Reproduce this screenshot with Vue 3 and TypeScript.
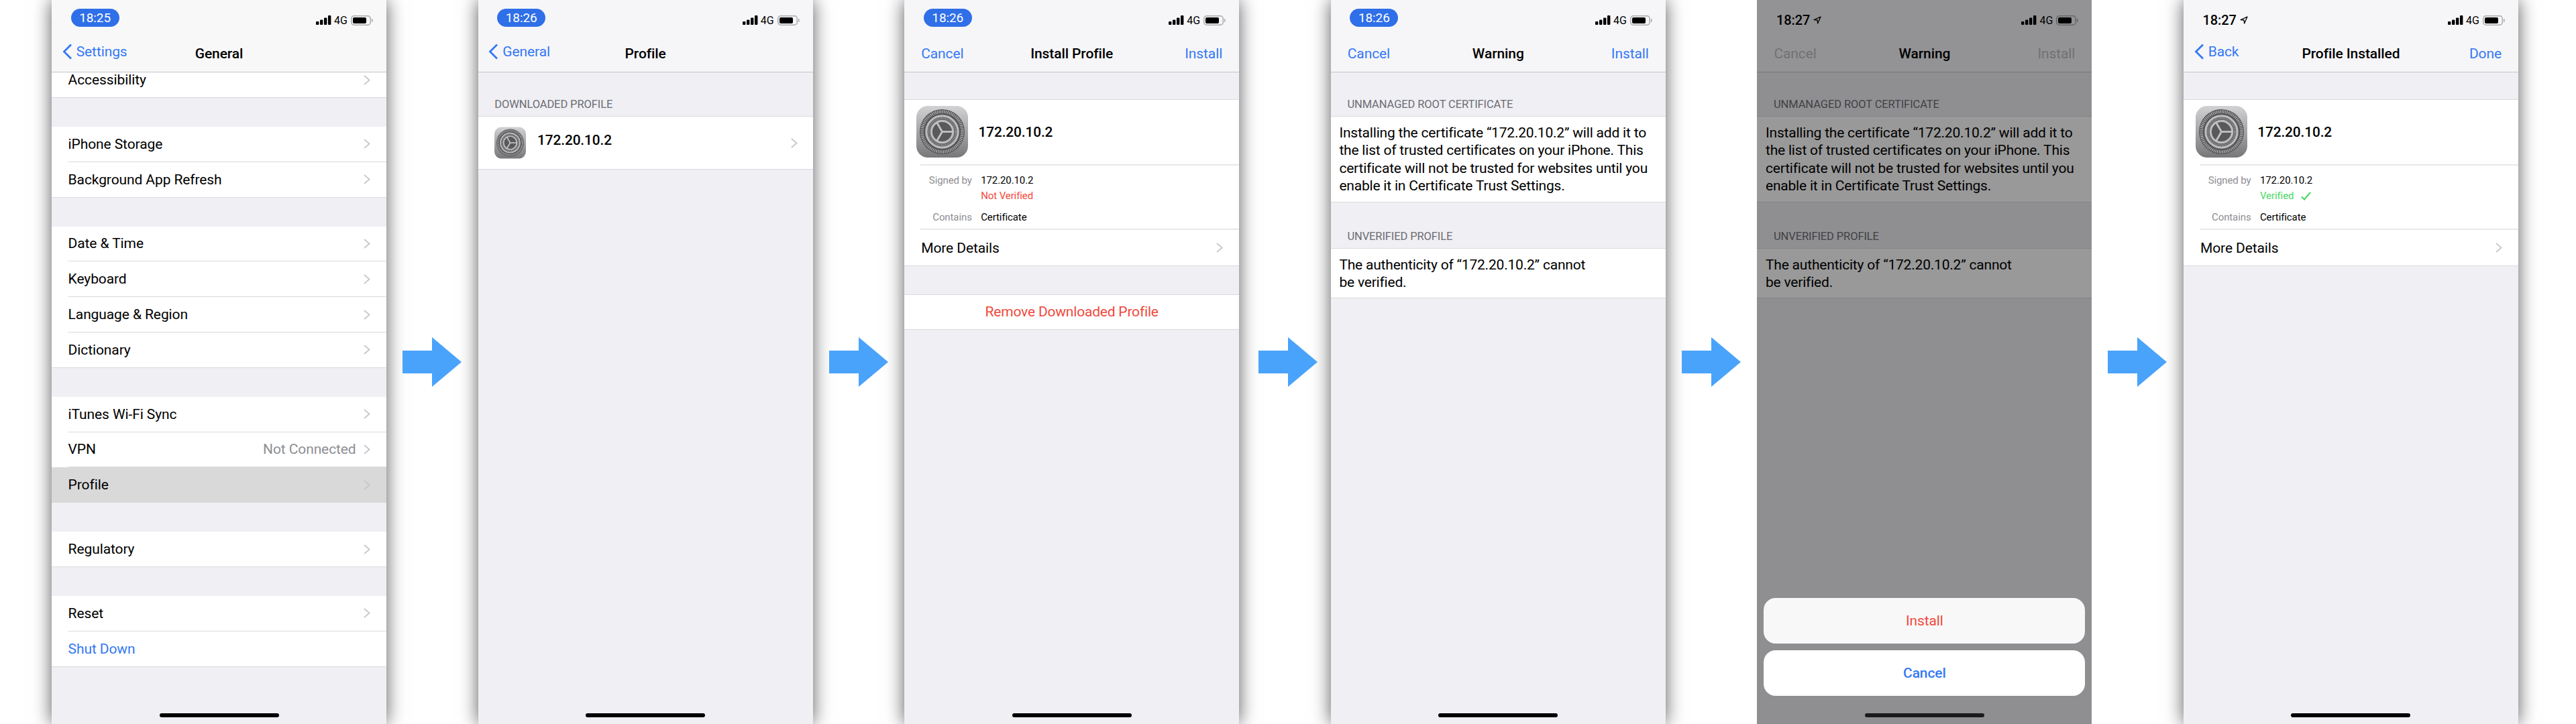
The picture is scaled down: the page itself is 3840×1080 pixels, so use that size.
<template>
  <div class="flow">
    <!-- shared glyphs -->
    <svg class="defs" aria-hidden="true">
      <defs>
        <linearGradient id="gearBg" x1="0" y1="0" x2="0" y2="1">
          <stop offset="0" stop-color="#d2d2d4" />
          <stop offset="1" stop-color="#77777a" />
        </linearGradient>
      </defs>
      <symbol id="gear" viewBox="0 0 77 77">
        <rect width="77" height="77" rx="17" fill="url(#gearBg)" />
        <circle cx="38.5" cy="38.5" r="33.5" fill="#555557" />
        <circle cx="38.5" cy="38.5" r="30" fill="none" stroke="#bdbdbf" stroke-width="4.6" stroke-dasharray="1.1 1.518" />
        <circle cx="38.5" cy="38.5" r="23.6" fill="none" stroke="#bcbcbe" stroke-width="3.2" />
        <circle cx="38.5" cy="38.5" r="20" fill="none" stroke="#a6a6a8" stroke-width="3" stroke-dasharray="1 1.094" />
        <circle cx="38.5" cy="38.5" r="16.2" fill="#59595b" stroke="#bcbcbe" stroke-width="3.2" />
        <g stroke="#c2c2c4" stroke-width="2.8">
          <line x1="38.5" y1="38.5" x2="55" y2="38.5" />
          <line x1="38.5" y1="38.5" x2="30.2" y2="24.2" />
          <line x1="38.5" y1="38.5" x2="30.2" y2="52.8" />
        </g>
      </symbol>
      <symbol id="chevron" viewBox="0 0 10 15">
        <polyline points="1,1 8.6,7.5 1,14" fill="none" stroke="#c7c7cc" stroke-width="1.8" />
      </symbol>
    </svg>

    <template v-for="(screen, i) in screens" :key="screen.kind">
      <section class="phone" :class="{ dimmed: screen.kind === 'sheet', bare: screen.kind === 'sheet' }">
        <header class="bar">
          <div class="status">
            <span v-if="screen.pill" class="time-pill">{{ screen.time }}</span>
            <span v-else class="time-plain">
              {{ screen.time }}
              <svg width="12" height="12" viewBox="0 0 12 12">
                <path d="M11 1 1.2 5.6l4.9.4.5 4.9z" fill="none" stroke="#000" stroke-width="1.3" stroke-linejoin="round" />
              </svg>
            </span>
            <div class="indicators">
              <svg width="23" height="14" viewBox="0 0 23 14">
                <rect x="0" y="9" width="4.4" height="5" rx="1" />
                <rect x="6" y="6.5" width="4.4" height="7.5" rx="1" />
                <rect x="12" y="3.5" width="4.4" height="10.5" rx="1" />
                <rect x="18" y="0" width="4.4" height="14" rx="1" />
              </svg>
              <span class="net">4G</span>
              <svg class="battery" width="33" height="15" viewBox="0 0 33 15">
                <rect x=".75" y=".75" width="28.5" height="13.5" rx="4" fill="none" stroke="#a9a9ac" stroke-width="1.5" />
                <rect x="3" y="3" width="20" height="9" rx="2" fill="#000" />
                <rect x="31" y="5" width="1.6" height="5" rx=".8" fill="#a9a9ac" />
              </svg>
            </div>
          </div>
          <nav class="nav">
            <div class="nav-left">
              <span v-if="screen.left" class="nav-action" :class="{ back: screen.hasBack }">
                <svg v-if="screen.hasBack" width="15" height="24" viewBox="0 0 15 24">
                  <polyline points="13,1.5 2.5,12 13,22.5" fill="none" stroke="currentColor" stroke-width="2.8" />
                </svg>
                {{ screen.left }}
              </span>
            </div>
            <span class="nav-title">{{ screen.title }}</span>
            <div class="nav-right">
              <span v-if="screen.right" class="nav-action">{{ screen.right }}</span>
            </div>
          </nav>
        </header>

        <main class="content">
          <!-- General settings list -->
          <template v-if="screen.kind === 'settings'">
            <div v-for="(group, g) in settingsGroups" :key="g" class="group" :class="{ clipped: g === 0 }">
              <div v-for="row in group" :key="row.label" class="row" :class="{ active: row.active }">
                <span :class="{ link: row.link }">{{ row.label }}</span>
                <span v-if="row.value" class="row-value">{{ row.value }}</span>
                <svg v-if="!row.link" class="chevron"><use href="#chevron" /></svg>
              </div>
            </div>
          </template>

          <template v-else-if="screen.kind === 'downloaded'">
            <h2 class="section-label">DOWNLOADED PROFILE</h2>
            <div class="block profile-row">
              <svg class="gear-small"><use href="#gear" /></svg>
              <span class="profile-name">172.20.10.2</span>
              <svg class="chevron"><use href="#chevron" /></svg>
            </div>
          </template>

          <template v-else-if="screen.kind === 'install' || screen.kind === 'installed'">
            <div class="block card">
              <div class="card-head">
                <svg class="gear-large"><use href="#gear" /></svg>
                <span class="profile-name">172.20.10.2</span>
              </div>
              <dl class="details">
                <dt>Signed by</dt>
                <dd>172.20.10.2</dd>
                <dt></dt>
                <dd v-if="screen.kind === 'install'" class="bad">Not Verified</dd>
                <dd v-else class="good">
                  Verified
                  <svg width="15" height="13" viewBox="0 0 15 13">
                    <polyline points="1,7.5 5,11.5 14,1" fill="none" stroke="#4cd964" stroke-width="2.2" />
                  </svg>
                </dd>
                <dt class="contains">Contains</dt>
                <dd class="contains">Certificate</dd>
              </dl>
              <div class="more">
                More Details
                <svg class="chevron"><use href="#chevron" /></svg>
              </div>
            </div>
            <div v-if="screen.kind === 'install'" class="block remove">Remove Downloaded Profile</div>
          </template>

          <template v-else>
            <h2 class="section-label">UNMANAGED ROOT CERTIFICATE</h2>
            <p class="block note">
              Installing the certificate “172.20.10.2” will add it to<br />
              the list of trusted certificates on your iPhone. This<br />
              certificate will not be trusted for websites until you<br />
              enable it in Certificate Trust Settings.
            </p>
            <h2 class="section-label second">UNVERIFIED PROFILE</h2>
            <p class="block note">
              The authenticity of “172.20.10.2” cannot<br />
              be verified.
            </p>
          </template>
        </main>

        <div v-if="screen.kind === 'sheet'" class="scrim"></div>
        <div v-if="screen.kind === 'sheet'" class="sheet">
          <button class="sheet-btn install">Install</button>
          <button class="sheet-btn cancel">Cancel</button>
        </div>
        <div class="home-bar"></div>
      </section>

      <div v-if="i < screens.length - 1" class="arrow-slot">
        <svg class="arrow" :class="{ shifted: i === 2 }" width="88" height="74" viewBox="0 0 88 74">
          <polygon points="0,20 44,20 44,0 88,37 44,74 44,54 0,54" fill="#4aa3fb" />
        </svg>
      </div>
    </template>
  </div>
</template>

<script setup lang="ts">
interface Screen {
  kind: string
  time: string
  pill: boolean
  left: string
  hasBack: boolean
  title: string
  right: string
}

interface SettingsRow {
  label: string
  value?: string
  active?: boolean
  link?: boolean
}

const screens: Screen[] = [
  { kind: 'settings', time: '18:25', pill: true, left: 'Settings', hasBack: true, title: 'General', right: '' },
  { kind: 'downloaded', time: '18:26', pill: true, left: 'General', hasBack: true, title: 'Profile', right: '' },
  { kind: 'install', time: '18:26', pill: true, left: 'Cancel', hasBack: false, title: 'Install Profile', right: 'Install' },
  { kind: 'warning', time: '18:26', pill: true, left: 'Cancel', hasBack: false, title: 'Warning', right: 'Install' },
  { kind: 'sheet', time: '18:27', pill: false, left: 'Cancel', hasBack: false, title: 'Warning', right: 'Install' },
  { kind: 'installed', time: '18:27', pill: false, left: 'Back', hasBack: true, title: 'Profile Installed', right: 'Done' },
]

const settingsGroups: SettingsRow[][] = [
  [{ label: 'Accessibility' }],
  [{ label: 'iPhone Storage' }, { label: 'Background App Refresh' }],
  [{ label: 'Date & Time' }, { label: 'Keyboard' }, { label: 'Language & Region' }, { label: 'Dictionary' }],
  [{ label: 'iTunes Wi-Fi Sync' }, { label: 'VPN', value: 'Not Connected' }, { label: 'Profile', active: true }],
  [{ label: 'Regulatory' }],
  [{ label: 'Reset' }, { label: 'Shut Down', link: true }],
]
</script>

<style scoped>
.flow {
  display: flex;
  width: 3840px;
  height: 1080px;
  padding-left: 77px;
  box-sizing: border-box;
  background: #fff;
  overflow: hidden;
  font-family: Roboto, "Liberation Sans", sans-serif;
  font-size: 21px;
  letter-spacing: -0.1px;
  color: #000;
}

.defs {
  position: absolute;
  width: 0;
  height: 0;
}

.phone {
  position: relative;
  flex: 0 0 499px;
  display: flex;
  flex-direction: column;
  height: 1080px;
  background: #efeff4;
  box-shadow: 0 0 26px rgba(0, 0, 0, 0.65);
}

.phone.bare {
  box-shadow: none;
}

.arrow-slot {
  flex: 0 0 136.6px;
  display: flex;
  align-items: center;
  position: relative;
  z-index: 1;
}

.arrow {
  margin-left: 24px;
}

.arrow.shifted {
  margin-left: 29px;
}

.bar {
  flex: 0 0 108px;
  box-sizing: border-box;
  background: #f6f6f8;
  border-bottom: 1px solid #c4c4c7;
}

.phone:first-of-type .bar {
  background: #f8f8f8;
}

.status {
  height: 52px;
  display: flex;
  align-items: center;
  justify-content: space-between;
  padding: 0 20px 0 28.6px;
}

.time-pill {
  width: 72px;
  height: 27px;
  line-height: 27px;
  border-radius: 14px;
  background: #2f6fe8;
  color: #fff;
  text-align: center;
  font-size: 19px;
}

.time-plain {
  display: flex;
  align-items: center;
  gap: 5px;
  margin-top: 8px;
  font-size: 20px;
  font-weight: 500;
}

.indicators {
  display: flex;
  align-items: center;
  margin-top: 8px;
  gap: 4px;
}

.net {
  font-size: 16px;
  letter-spacing: 0;
}

.battery {
  margin-left: 1px;
}

.nav {
  height: 55px;
  display: grid;
  grid-template-columns: 1fr auto 1fr;
  align-items: center;
  padding: 0 25px;
}

.nav-title {
  font-weight: 500;
}

.nav-right {
  text-align: right;
}

.nav-action {
  color: #3478f6;
}

.nav-action.back {
  display: inline-flex;
  align-items: center;
  gap: 6px;
  margin-left: -9.3px;
}

.dimmed .nav-action {
  color: #bdbdbd;
}

.content {
  flex: 1;
  overflow: hidden;
}

.group {
  margin-bottom: 43px;
  background: #fff;
}

.group.clipped {
  margin-top: -14.8px;
}

.row {
  height: 52.8px;
  box-sizing: border-box;
  display: flex;
  align-items: center;
  padding: 0 24.4px 0 24.6px;
  position: relative;
  border-bottom: 1px solid #dadade;
}

.group .row:not(:last-child) {
  border-bottom-color: transparent;
}

.group .row:not(:last-child)::after {
  content: "";
  position: absolute;
  left: 24.6px;
  right: 0;
  bottom: -1px;
  height: 1px;
  background: #dadade;
}

.row.active {
  background: #d9d9d9;
}

.link {
  color: #3478f6;
}

.row-value {
  margin-left: auto;
  color: #8e8e93;
}

.chevron {
  width: 10px;
  height: 15px;
  margin-left: auto;
  flex-shrink: 0;
}

.row-value + .chevron {
  margin-left: 11px;
}

.section-label {
  margin: 0;
  padding: 38px 0 7px 24.6px;
  font-size: 16.5px;
  line-height: 20px;
  font-weight: 400;
  color: #6d6d72;
}

.section-label.second {
  padding-top: 41px;
}

.block {
  margin: 0;
  background: #fff;
  border-top: 1px solid #dadade;
  border-bottom: 1px solid #dadade;
}

.profile-row {
  height: 80px;
  box-sizing: border-box;
  display: flex;
  align-items: center;
  padding: 0 23px 0 24.5px;
}

.gear-small {
  width: 47px;
  height: 48px;
  margin-right: 17px;
}

.profile-name {
  margin-bottom: 8px;
  font-size: 20.8px;
  font-weight: 500;
}

.card {
  margin-top: 40px;
}

.card-head {
  height: 97px;
  margin-top: -1px;
  box-sizing: border-box;
  display: flex;
  align-items: center;
  padding-left: 18.3px;
}

.gear-large {
  width: 77px;
  height: 77px;
  margin-right: 15px;
}

.card-head .profile-name {
  margin-bottom: 0;
}

.details {
  margin: 0 0 0 24px;
  padding: 11px 0 5px;
  display: grid;
  grid-template-columns: 76.6px 1fr;
  column-gap: 13.4px;
  font-size: 15px;
  line-height: 23px;
  border-top: 2px solid #e8e8ea;
  border-bottom: 2px solid #e8e8ea;
}

.details dt {
  text-align: right;
  color: #8e8e93;
}

.details dd {
  margin: 0;
}

.details .contains {
  margin-top: 9px;
}

.details .bad {
  color: #f5483b;
}

.details .good {
  display: flex;
  align-items: center;
  gap: 11px;
  color: #4cd964;
}

.more {
  height: 53px;
  box-sizing: border-box;
  display: flex;
  align-items: center;
  padding: 0 24.4px 0 25px;
}

.remove {
  margin-top: 42px;
  height: 53px;
  line-height: 51px;
  box-sizing: border-box;
  text-align: center;
  letter-spacing: -0.2px;
  color: #f0493c;
}

.note {
  padding: 11px 10px 10px 12.6px;
  line-height: 26.4px;
  letter-spacing: -0.2px;
}

.scrim {
  position: absolute;
  inset: 0;
  background: rgba(0, 0, 0, 0.4);
}

.sheet {
  position: absolute;
  left: 10px;
  right: 10px;
  bottom: 42px;
  display: flex;
  flex-direction: column;
  gap: 10px;
}

.sheet-btn {
  height: 68px;
  border: 0;
  border-radius: 18px;
  background: #fff;
  font: inherit;
  letter-spacing: inherit;
}

.sheet-btn.install {
  background: #f8f8f8;
  color: #f0493c;
}

.sheet-btn.cancel {
  color: #3478f6;
  font-weight: 500;
}

.home-bar {
  position: absolute;
  left: 50%;
  bottom: 10px;
  width: 178px;
  height: 6px;
  margin-left: -89px;
  border-radius: 3px;
  background: #000;
}

.dimmed .home-bar {
  background: #1a1a1a;
}
</style>

<style>
body {
  margin: 0;
  overflow: hidden;
}
</style>
